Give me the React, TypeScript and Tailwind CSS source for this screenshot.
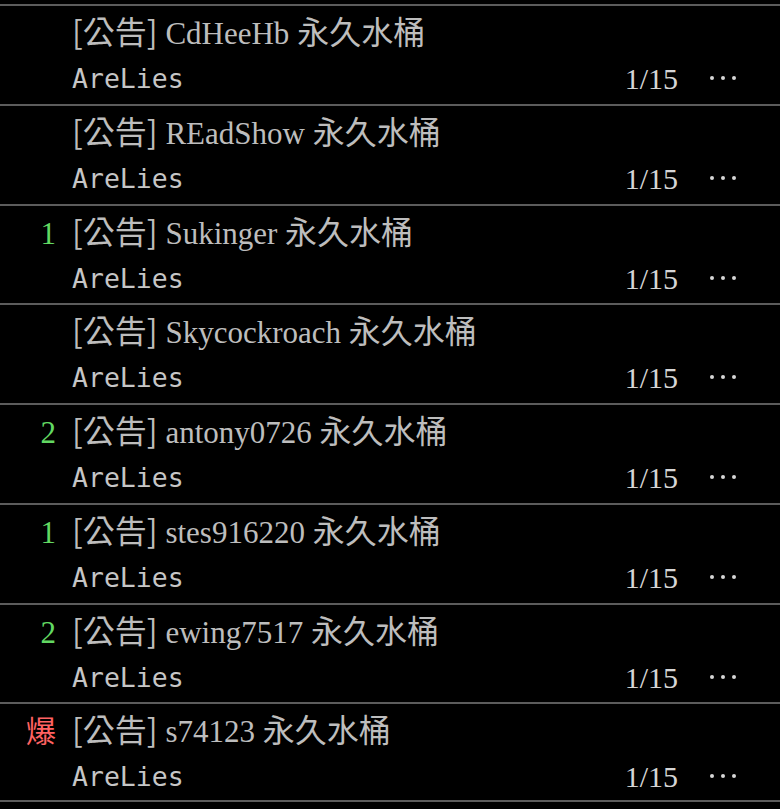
const posts = [
  { tag: "", name: "CdHeeHb" },
  { tag: "", name: "REadShow" },
  { tag: "1", name: "Sukinger" },
  { tag: "", name: "Skycockroach" },
  { tag: "2", name: "antony0726" },
  { tag: "1", name: "stes916220" },
  { tag: "2", name: "ewing7517" },
  { tag: "爆", name: "s74123" },
];

function Row({ tag, name, last }: { tag: string; name: string; last: boolean }) {
  const hot = tag === "爆";
  return (
    <div
      className={`h-[99.75px] border-t-2 border-[#5c5c5c] pt-[4px] ${
        last ? "border-b-2" : ""
      }`}
    >
      {/* title line */}
      <div className="flex items-baseline text-[31px] leading-[40px] font-['Liberation_Serif','Noto_Sans_CJK_TC',serif]">
        <span
          className={`w-[56px] shrink-0 text-right ${
            hot ? "text-[#ff6262] text-[30px]" : "text-[#62d862]"
          }`}
        >
          {tag}
        </span>
        <span className="ml-[16px] text-[#bdbdbd] whitespace-nowrap">
          <span className="text-[32px] font-['Noto_Sans_CJK_TC',sans-serif]">[公告]</span>{" "}
          {name} <span className="text-[32px]">永久水桶</span>
        </span>
      </div>

      {/* author + count */}
      <div className="flex items-center justify-between pl-[72px] pr-[44px] mt-[5px]">
        <span className="text-[26.5px] leading-[40px] text-[#c6c6c6] font-['DejaVu_Sans_Mono',monospace]">
          AreLies
        </span>
        <div className="flex items-center">
          <span className="text-[30px] leading-[40px] text-[#d6d6d6] font-['Liberation_Serif',serif]">
            1/15
          </span>
          <div className="ml-[32px] -mt-[2px] flex items-center gap-[7px]">
            <span className="w-[4px] h-[4px] rounded-full bg-[#d6d6d6]" />
            <span className="w-[4px] h-[4px] rounded-full bg-[#d6d6d6]" />
            <span className="w-[4px] h-[4px] rounded-full bg-[#d6d6d6]" />
          </div>
        </div>
      </div>
    </div>
  );
}

export default function App() {
  return (
    <div className="h-[809px] w-full bg-black pt-[4px] overflow-hidden">
      {posts.map((p, i) => (
        <Row key={i} tag={p.tag} name={p.name} last={i === posts.length - 1} />
      ))}
    </div>
  );
}
